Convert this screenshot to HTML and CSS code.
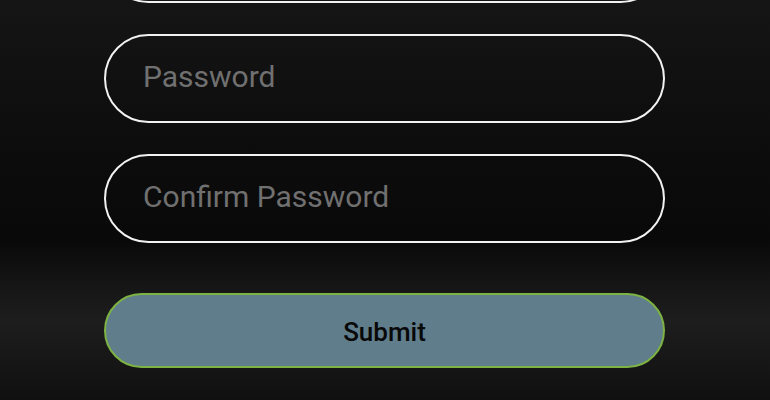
FILE: index.html
```html
<!DOCTYPE html>
<html lang="en">

<head>
  <meta charset="UTF-8" />
  <meta name="viewport" content="width=device-width, initial-scale=1.0" />
  <title>Sign Up</title>
  <link rel="stylesheet" href="styles.css">
</head>

<body>
  <section class="signup">
    <form class="form-signup" onsubmit="return false">
      <input type="email" name="email" placeholder="Email">
      <input type="password" name="password" placeholder="Password">
      <input type="password" name="confirm" placeholder="Confirm Password">
      <button type="submit" class="submitbutton">Submit</button>
    </form>
  </section>
</body>

</html>
```

FILE: styles.css
```css
/* Reset some default styles */
* {
    margin: 0;
    padding: 0;
    box-sizing: border-box;
}

body {
    height: 400px;
    overflow: hidden;
    font-family: Roboto, "Noto Sans", sans-serif;
    background: linear-gradient(180deg, #151515 0%, #0d0d0d 35%, #090909 60%, #161616 72%, #1d1d1d 80%, #181818 88%, #101010 100%);
}

/* Style for the sign up section */
.signup {
    padding: 0 105px 0 104px;
}

/* Style for the form */
.form-signup {
    display: flex;
    flex-direction: column;
    margin-top: -86px;
}

/* Style for the text fields */
.form-signup input {
    width: 100%;
    height: 89px;
    margin-bottom: 31px;
    padding: 0 37px 4px;
    background: transparent;
    border: 2px solid #f2f2f2;
    border-radius: 45px;
    color: #ddd;
    font-family: inherit;
    font-size: 30px;
    outline: none;
}

.form-signup input::placeholder {
    color: #707070;
}

/* Style for the submit button */
.submitbutton {
    width: 100%;
    height: 75px;
    margin-top: 19px;
    padding-top: 2px;
    background-color: #607d8b;
    color: #080808;
    border: 2px solid #7cb342;
    border-radius: 38px;
    font-family: inherit;
    font-size: 26px;
    font-weight: 500;
    cursor: pointer;
}
```
